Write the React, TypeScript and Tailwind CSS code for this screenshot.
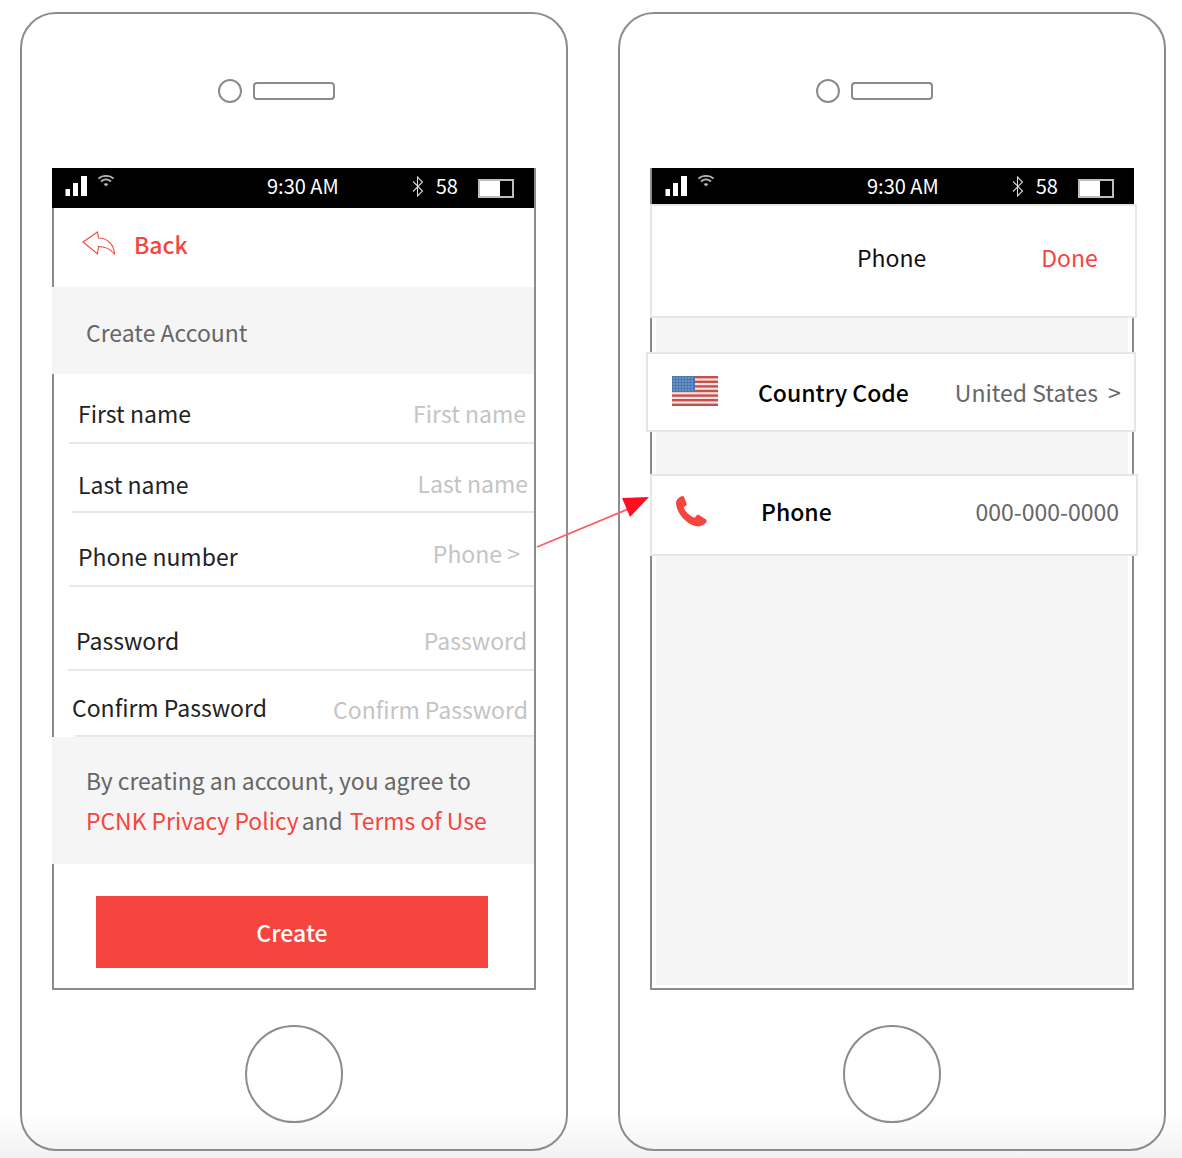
const frame = "border-[#8c8c8c]";

const rows = [
  { label: "First name", hint: "First name", row: "h-[70px] ml-[15px]", labelCls: "ml-[9px] mt-[24px]", hintCls: "mr-[8px] mt-[24px]" },
  { label: "Last name", hint: "Last name", row: "h-[69px] ml-[18px]", labelCls: "ml-[6px] mt-[25px]", hintCls: "mr-[6px] mt-[24px]" },
  { label: "Phone number", hint: "Phone >", row: "h-[74px] ml-[15px]", labelCls: "ml-[9px] mt-[28px]", hintCls: "mr-[14px] mt-[25px]" },
  { label: "Password", hint: "Password", row: "h-[84px] ml-[14px]", labelCls: "ml-[8px] mt-[38px]", hintCls: "mr-[7px] mt-[38px]" },
  { label: "Confirm Password", hint: "Confirm Password", row: "h-[66px] ml-[21px]", labelCls: "-ml-[3px] mt-[21px]", hintCls: "mr-[6px] mt-[23px]" },
];

function Signal() {
  return (
    <svg width="24" height="22" viewBox="0 0 24 22" className="shrink-0">
      <rect x="0.5" y="13" width="4.5" height="7" fill="#fff" />
      <rect x="8" y="7" width="5" height="13" fill="#fff" />
      <rect x="16" y="0" width="6" height="20" fill="#fff" />
    </svg>
  );
}

function Wifi() {
  return (
    <svg width="16" height="13" viewBox="0 0 16 13" className="shrink-0" fill="none" stroke="#b5b5b5">
      <path d="M0.5 3.5C4.5 0 11.5 0 15.5 3.5" strokeWidth="1.8" />
      <path d="M3 6.5C6 4 10 4 13 6.5" strokeWidth="1.8" />
      <path d="M5.5 9C7 8 9 8 10.5 9L8 11.5Z" fill="#b5b5b5" stroke="none" />
    </svg>
  );
}

function Bluetooth() {
  return (
    <svg width="12" height="21" viewBox="0 0 12 21" className="shrink-0" fill="none" stroke="#d8d8d8" strokeWidth="1.1">
      <path d="M1 5.5L10.5 15L5.5 20V1L10.5 6L1 15.5" />
    </svg>
  );
}

function StatusBar({ height }: { height: string }) {
  return (
    <div className={`flex bg-black text-white text-[20px] leading-[28px] pl-[13px] ${height}`}>
      <div className="mt-[8px]">
        <Signal />
      </div>
      <div className="ml-[9px] mt-[7px]">
        <Wifi />
      </div>
      <span className="ml-[153px] mt-[4px]">9:30 AM</span>
      <div className="ml-[73px] mt-[8px]">
        <Bluetooth />
      </div>
      <span className="ml-[12px] mt-[4px]">58</span>
      <div className="ml-[20px] mt-[11px] flex h-[19px] w-[36px] border-2 border-[#bdbdbd] bg-black">
        <div className="h-full w-[20px] bg-white" />
      </div>
    </div>
  );
}

function PhoneFrame({ children }: { children: React.ReactNode }) {
  return (
    <div className={`h-[1139px] w-[548px] shrink-0 rounded-[36px] border-2 ${frame}`}>
      <div className="ml-[196px] mt-[65px] flex items-center gap-[11px]">
        <div className={`h-[24px] w-[24px] rounded-full border-2 ${frame}`} />
        <div className={`h-[18px] w-[82px] rounded-[4px] border-2 ${frame}`} />
      </div>
      <div className="ml-[30px] mt-[65px] h-[822px] w-[484px]">{children}</div>
      <div className={`ml-[223px] mt-[35px] h-[98px] w-[98px] rounded-full border-2 ${frame}`} />
    </div>
  );
}

function CreateAccount() {
  return (
    <div className={`h-full border-x-2 border-b-2 ${frame} text-[23px]`}>
      <StatusBar height="h-[40px] -ml-[2px]" />
      <div className="flex h-[79px] items-start bg-white">
        <svg width="34" height="26" viewBox="0 0 34 26" className="ml-[28px] mt-[22px]" fill="none" stroke="#f5453e">
          <path d="M1 12L15.5 2L16.5 8C26 8 32 15 32.5 24C28 18.5 23 16.5 16.5 16.5L15.5 24Z" strokeWidth="1.1" />
        </svg>
        <span className="ml-[18px] mt-[20px] leading-[32px] font-medium text-[#f5453e]">Back</span>
      </div>
      <div className="-ml-[2px] h-[87px] bg-[#f5f5f5] pl-[34px] pt-[28px] leading-[34px] text-[#666666]">Create Account</div>
      {rows.map((r) => (
        <div key={r.label} className={`flex items-start justify-between border-b-2 border-[#e8e8e8] ${r.row}`}>
          <span className={`leading-[30px] text-[#222222] ${r.labelCls}`}>{r.label}</span>
          <span className={`leading-[30px] text-[#c4c4c4] ${r.hintCls}`}>{r.hint}</span>
        </div>
      ))}
      <div className="-ml-[2px] h-[127px] bg-[#f5f5f5] pl-[34px] pt-[23px] text-[22.9px] leading-[40px] text-[#666666]">
        <div>By creating an account, you agree to</div>
        <div className="flex">
          <span className="text-[#f5453e]">PCNK Privacy Policy</span>
          <span className="ml-[3px]">and</span>
          <span className="ml-[7px] text-[#f5453e]">Terms of Use</span>
        </div>
      </div>
      <div className="ml-[42px] mt-[32px] flex h-[72px] w-[392px] items-center justify-center bg-[#f5453e] pt-[1px] font-medium text-white">
        Create
      </div>
    </div>
  );
}

function UsFlag() {
  const stripes = [0, 1, 2, 3, 4, 5, 6];
  const starRows = [2, 5, 8, 11, 14];
  const starCols = [2, 5, 8, 11, 14, 17, 20];
  return (
    <svg width="46" height="30" viewBox="0 0 46 30" className="shrink-0">
      <rect width="46" height="30" fill="#f4e4e2" />
      {stripes.map((s) => (
        <rect key={s} y={s * 4.6} width="46" height="2.4" fill="#c9504a" />
      ))}
      <rect width="23" height="16" fill="#4a78b0" />
      {starRows.map((y) =>
        starCols.map((x) => <circle key={`${x}-${y}`} cx={x} cy={y} r="0.7" fill="#a9c0dc" />)
      )}
    </svg>
  );
}

function PhoneIcon() {
  return (
    <svg width="32" height="31" viewBox="0 0 31 30" className="shrink-0" fill="#f5453e">
      <path d="M1 6C1.5 3 5 .5 7 0C8.5 0 9 1 9.5 3L11.5 8C11.5 9.5 9 10 8.5 11C9 14 14 19.5 19 21C20 20.5 21 18 22.5 18L29 22C31 23 31 25 30 26C28 28 25 29.5 23 29.5C12 29 1 17 1 6Z" />
    </svg>
  );
}

function PhoneSettings() {
  return (
    <div className={`h-full border-x-2 border-b-2 ${frame} bg-white text-[23px]`}>
      <StatusBar height="h-[36px] -mr-[2px]" />
      <div className="-ml-[2px] -mr-[5px] flex h-[114px] items-start border-2 border-[#e6e6e6] bg-white leading-[32px]">
        <span className="ml-[205px] mt-[35px] text-[#111111]">Phone</span>
        <span className="ml-[115px] mt-[35px] text-[#f5453e]">Done</span>
      </div>
      <div className="mx-[4px] h-[667px] bg-[#f5f5f5] pt-[34px]">
        <div className="-ml-[10px] flex h-[80px] w-[490px] items-center whitespace-nowrap border-2 border-[#e6e6e6] bg-white pb-[2px] pl-[24px]">
          <UsFlag />
          <span className="ml-[40px] mt-[3px] font-medium text-black">Country Code</span>
          <span className="ml-[46px] mt-[3px] text-[#666666]">United States</span>
          <span className="ml-[10px] mt-[3px] text-[#666666]">&gt;</span>
        </div>
        <div className="-ml-[6px] mt-[42px] flex h-[82px] w-[488px] items-center border-2 border-[#e6e6e6] bg-white pb-[8px] pl-[23px]">
          <PhoneIcon />
          <span className="ml-[54px] font-medium text-black">Phone</span>
          <span className="ml-auto mr-[17px] text-[#666666]">000-000-0000</span>
        </div>
      </div>
    </div>
  );
}

export default function App() {
  return (
    <div className="relative h-[1158px] w-[1182px] overflow-hidden bg-[linear-gradient(to_bottom,#ffffff_96%,#f2f2f2_100%)] font-['Noto_Sans_CJK_SC',sans-serif]">
      <div className="flex gap-[50px] pl-[20px] pt-[12px]">
        <PhoneFrame>
          <CreateAccount />
        </PhoneFrame>
        <PhoneFrame>
          <PhoneSettings />
        </PhoneFrame>
      </div>
      {/* link arrow between the two screens */}
      <svg width="120" height="60" viewBox="0 0 120 60" className="absolute left-[535px] top-[495px]">
        <path d="M2 52L98 12" stroke="#ff5a66" strokeWidth="1.8" />
        <path d="M114 2L87 3L95 22Z" fill="#ff0f1f" />
      </svg>
    </div>
  );
}
